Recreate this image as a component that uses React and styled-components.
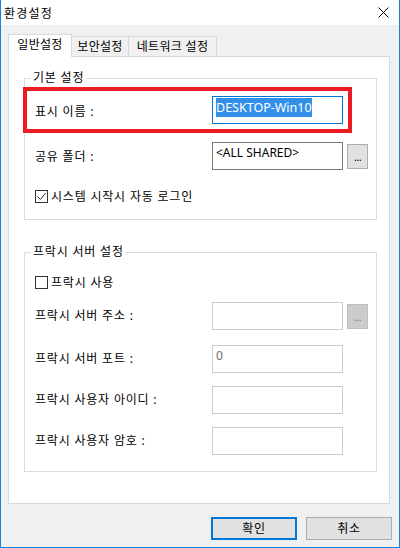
import React from 'react'
import styled, { createGlobalStyle } from 'styled-components'

const GlobalStyle = createGlobalStyle`
  body {
    margin: 0;
    font-family: "Noto Sans", "Noto Sans CJK KR", sans-serif;
    font-size: 12px;
    letter-spacing: 0.8px;
    color: #000;
  }
`

const Window = styled.div`
  width: 400px;
  height: 548px;
  box-sizing: border-box;
  border: 1px solid #1883d7;
  border-top: none;
  display: flex;
  flex-direction: column;
  background: #f0f0f0;
`

const TitleBar = styled.div`
  height: 25px;
  background: #fff;
  display: flex;
  align-items: center;
  justify-content: space-between;
  padding: 0 10px 0 3px;
  font-size: 12px;
  letter-spacing: 1.2px;
`

const Body = styled.div`
  flex: 1;
  padding: 9px 7px 0 7px;
  display: flex;
  flex-direction: column;
`

const TabStrip = styled.div`
  display: flex;
  align-items: flex-end;
  height: 22px;
`

const Tab = styled.div`
  box-sizing: border-box;
  width: ${(p) => p.w}px;
  height: ${(p) => (p.active ? 23 : 20)}px;
  margin-bottom: ${(p) => (p.active ? -1 : 0)}px;
  margin-left: ${(p) => (p.active ? 0 : -1)}px;
  background: ${(p) => (p.active ? '#fff' : '#f0f0f0')};
  border: 1px solid #d9d9d9;
  border-bottom: none;
  position: relative;
  z-index: ${(p) => (p.active ? 1 : 0)};
  display: flex;
  align-items: center;
  justify-content: center;
  padding-bottom: ${(p) => (p.active ? 2 : 0)}px;
  line-height: 16px;
  white-space: nowrap;
  letter-spacing: 0.3px;
`

const Panel = styled.div`
  box-sizing: border-box;
  width: 382px;
  height: 448px;
  background: #fff;
  border: 1px solid #d9d9d9;
  padding: 21px 12px 0 15px;
  display: flex;
  flex-direction: column;
`

const Group = styled.div`
  border: 1px solid #dcdcdc;
  display: flex;
  flex-direction: column;
  padding-bottom: ${(p) => p.pb}px;
  margin-top: ${(p) => p.mt || 0}px;
`

const Legend = styled.div`
  align-self: flex-start;
  margin: -9px 0 0 6px;
  padding: 0 2px;
  background: #fff;
  line-height: 16px;
`

const Row = styled.div`
  display: flex;
  align-items: center;
  height: 28px;
  padding-left: 10px;
  margin-top: ${(p) => p.mt}px;
  ${(p) =>
    p.highlight &&
    `
    width: 325px;
    height: 42px;
    box-sizing: border-box;
    outline: 4px solid #ed1c24;
    outline-offset: -2px;
  `}
`

const Label = styled.div`
  width: 177px;
  line-height: 16px;
  padding-top: ${(p) => p.dy || 0}px;
  white-space: nowrap;
`

const Field = styled.div`
  box-sizing: border-box;
  width: 131px;
  height: 28px;
  background: #fff;
  border: 1px solid ${(p) => (p.focused ? '#0078d7' : p.disabled ? '#cccccc' : '#7a7a7a')};
  padding: 1px 3px 0;
  line-height: 18px;
  letter-spacing: 0;
  color: ${(p) => (p.disabled ? '#6d6d6d' : '#000')};
  white-space: nowrap;
`

const Selected = styled.span`
  background: #3390e8;
  color: #fff;
  display: inline-block;
  line-height: 19px;
  font-size: 12.5px;
`

const Browse = styled.div`
  box-sizing: border-box;
  width: 21px;
  height: 25px;
  margin-left: 4px;
  background: ${(p) => (p.disabled ? '#cccccc' : '#e1e1e1')};
  border: 1px solid ${(p) => (p.disabled ? '#bfbfbf' : '#adadad')};
  color: ${(p) => (p.disabled ? '#838383' : '#000')};
  display: flex;
  align-items: flex-end;
  justify-content: center;
  padding-bottom: 6px;
  font-size: 11px;
  line-height: 10px;
  letter-spacing: -0.5px;
`

const CheckRow = styled.div`
  display: flex;
  align-items: center;
  height: 17px;
  padding-left: 10px;
  margin-top: ${(p) => p.mt}px;
  gap: 3px;
  line-height: 16px;
`

const Box = styled.div`
  box-sizing: border-box;
  width: 13px;
  height: 13px;
  border: 1px solid #333;
  background: #fff;
  display: flex;
  align-items: center;
  justify-content: center;
`

const Footer = styled.div`
  display: flex;
  justify-content: flex-end;
  gap: 9px;
  margin-top: 13px;
`

const Button = styled.div`
  box-sizing: border-box;
  width: 86px;
  height: 23px;
  background: #e1e1e1;
  border: ${(p) => (p.primary ? '2px solid #0078d7' : '1px solid #adadad')};
  display: flex;
  align-items: center;
  justify-content: center;
  line-height: 16px;
`

const CloseIcon = () => (
  <svg width="11" height="11" viewBox="0 0 11 11">
    <path d="M0.5 0.5 L10.5 10.5 M10.5 0.5 L0.5 10.5" stroke="#000" strokeWidth="1" />
  </svg>
)

const Check = ({ on }) => (
  <Box>
    {on && (
      <svg width="11" height="11" viewBox="0 0 11 11">
        <path d="M1.5 5.5 L4.5 8.5 L9.5 2" fill="none" stroke="#333" strokeWidth="1" />
      </svg>
    )}
  </Box>
)

export default function App() {
  return (
    <>
      <GlobalStyle />
      <Window>
        <TitleBar>
          <span>환경설정</span>
          <CloseIcon />
        </TitleBar>
        <Body>
          <TabStrip>
            <Tab active w={64}>일반설정</Tab>
            <Tab w={58}>보안설정</Tab>
            <Tab w={89}>네트워크 설정</Tab>
          </TabStrip>
          <Panel>
            <Group pb={14}>
              <Legend>기본 설정</Legend>
              <Row highlight mt={3}>
                <Label dy={4}>표시 이름 :</Label>
                <Field focused>
                  <Selected>DESKTOP-Win10</Selected>
                </Field>
              </Row>
              <Row mt={11}>
                <Label dy={2}>공유 폴더 :</Label>
                <Field>&lt;ALL SHARED&gt;</Field>
                <Browse>...</Browse>
              </Row>
              <CheckRow mt={18}>
                <Check on />
                시스템 시작시 자동 로그인
              </CheckRow>
            </Group>
            <Group pb={16} mt={32}>
              <Legend>프락시 서버 설정</Legend>
              <CheckRow mt={14}>
                <Check />
                프락시 사용
              </CheckRow>
              <Row mt={11}>
                <Label>프락시 서버 주소 :</Label>
                <Field disabled />
                <Browse disabled>...</Browse>
              </Row>
              <Row mt={15}>
                <Label>프락시 서버 포트 :</Label>
                <Field disabled>0</Field>
              </Row>
              <Row mt={13}>
                <Label>프락시 사용자 아이디 :</Label>
                <Field disabled />
              </Row>
              <Row mt={13}>
                <Label>프락시 사용자 암호 :</Label>
                <Field disabled />
              </Row>
            </Group>
          </Panel>
          <Footer>
            <Button primary>확인</Button>
            <Button>취소</Button>
          </Footer>
        </Body>
      </Window>
    </>
  )
}
